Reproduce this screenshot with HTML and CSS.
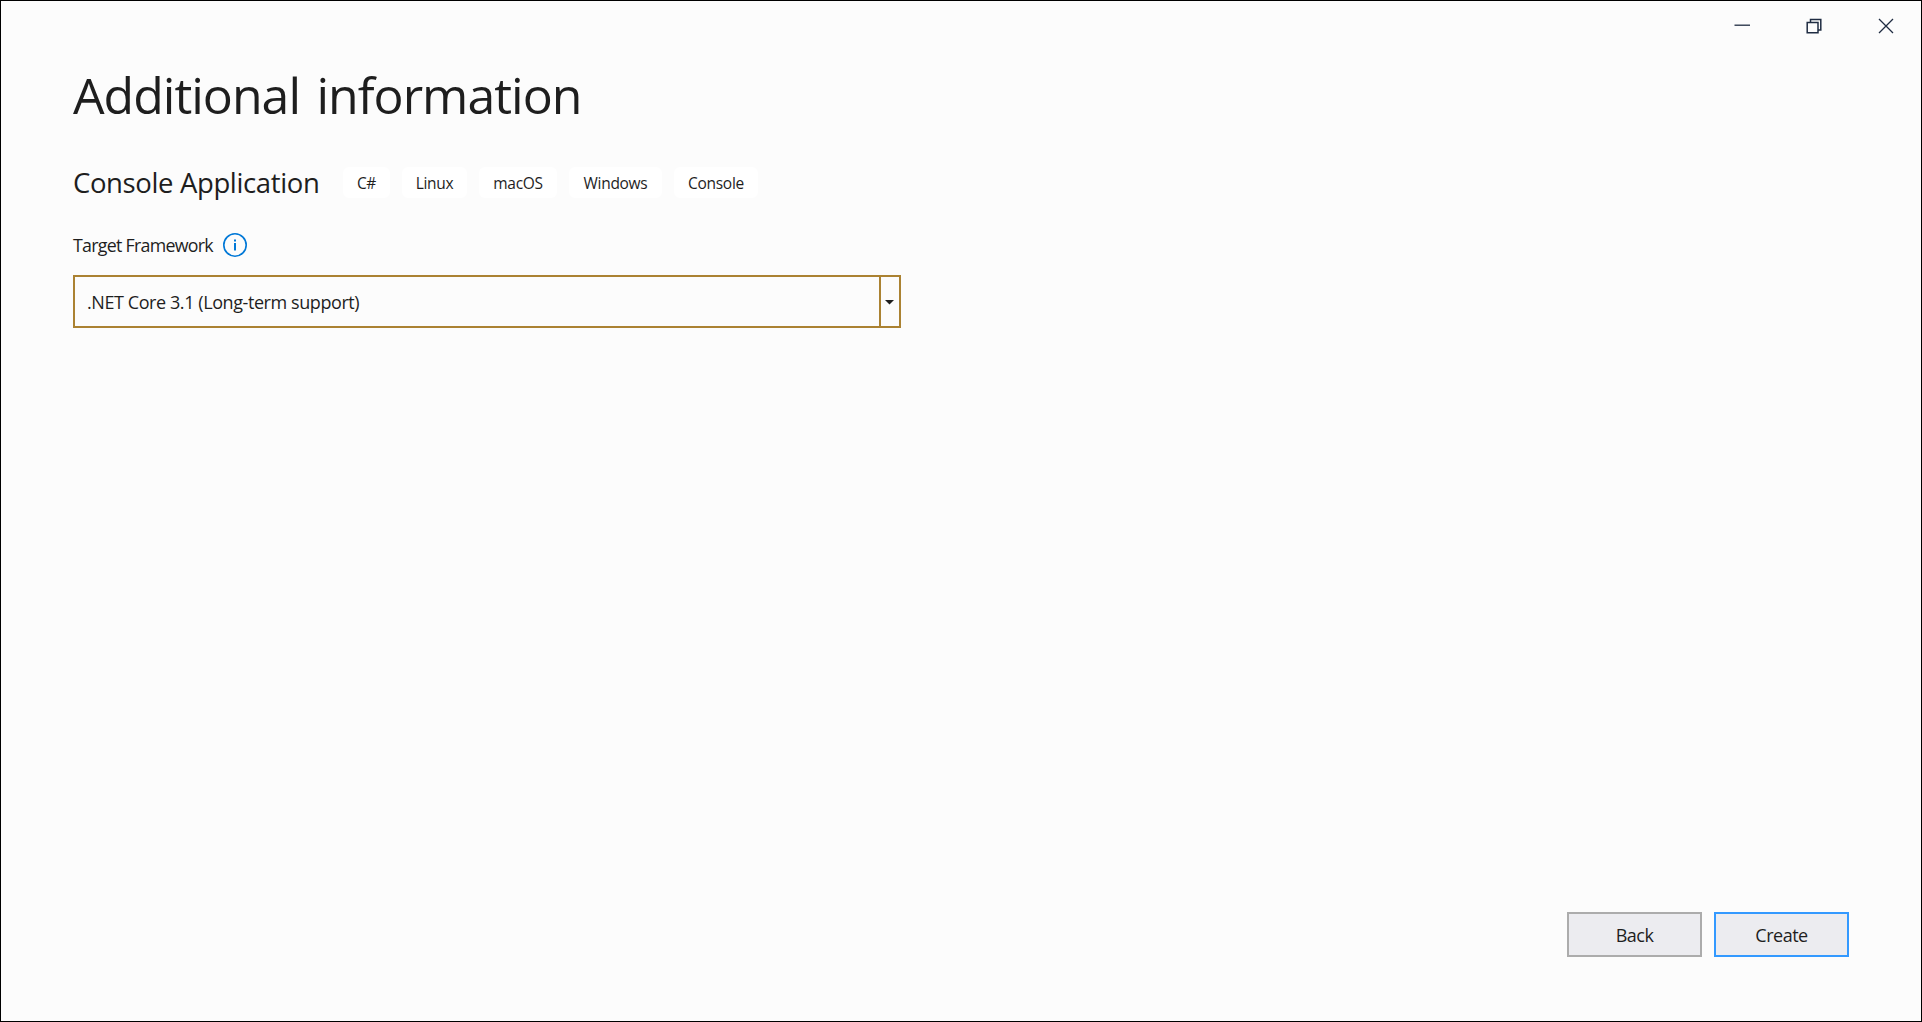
FILE: index.html
```html
<!DOCTYPE html>
<html lang="en">
<head>
<meta charset="utf-8">
<title>Additional information</title>
<link rel="stylesheet" href="styles.css">
</head>
<body>
<div class="window">
  <header class="caption">
    <svg class="caption-icon" viewBox="0 0 18 18"><path d="M1.5 8.2H17"/></svg>
    <svg class="caption-icon restore" viewBox="0 0 18 18"><path d="M5.5 5V2.5H15.8V13H13.5M2.2 5.5H13V15.7H2.2Z"/></svg>
    <svg class="caption-icon" viewBox="0 0 18 18"><path d="M2 2L16 16M16 2L2 16"/></svg>
  </header>
  <main class="content">
    <h1 class="title">Additional information</h1>
    <div class="project">
      <h2 class="project-name">Console Application</h2>
      <ul class="tags">
        <li class="tag tag-language">C#</li>
        <li class="tag tag-linux">Linux</li>
        <li class="tag tag-macos">macOS</li>
        <li class="tag tag-windows">Windows</li>
        <li class="tag tag-type">Console</li>
      </ul>
    </div>
    <div class="field-label">
      <span class="label-text">Target Framework</span>
      <svg class="info" viewBox="0 0 24 24"><circle cx="12" cy="12" r="11.2"/><path class="info-mark" d="M12 10V17.5M12 6.5V8.5"/></svg>
    </div>
    <div class="combo">
      <span class="combo-value">.NET Core 3.1 (Long-term support)</span>
      <span class="combo-toggle"><svg class="arrow" viewBox="0 0 9 5"><path d="M0 0H9L4.5 4.6Z"/></svg></span>
    </div>
  </main>
  <footer class="actions">
    <button class="button button-back"><span>Back</span></button>
    <button class="button button-create"><span>Create</span></button>
  </footer>
</div>
</body>
</html>
```
FILE: styles.css
```css
* { box-sizing: border-box; }
body {
  margin: 0;
  font-family: "Open Sans", "Noto Sans", sans-serif;
  color: #1e1e1e;
}
.window {
  display: flex;
  flex-direction: column;
  height: 1022px;
  border: 1px solid #000;
  background: #fcfcfc;
}
.caption {
  display: flex;
  justify-content: flex-end;
  gap: 54px;
  height: 54px;
  padding: 16px 26px 0 0;
}
.caption-icon {
  width: 18px;
  height: 18px;
  fill: none;
  stroke: #1f2c42;
  stroke-width: 1.3;
}
.restore { stroke-width: 1.5; }
.content {
  flex: 1;
  padding: 0 72px;
}
.title {
  margin: 0;
  font-size: 50px;
  font-weight: 400;
  line-height: 80px;
  letter-spacing: -1px;
  word-spacing: 4.5px;
}
.project {
  display: flex;
  align-items: center;
  height: 31px;
  margin-top: 32px;
}
.project-name {
  width: 270px;
  margin: 0;
  font-size: 27.5px;
  font-weight: 400;
  line-height: 31px;
  letter-spacing: -0.37px;
  white-space: nowrap;
}
.tags {
  display: flex;
  gap: 12px;
  margin: 0;
  padding: 0;
  list-style: none;
}
.tag {
  height: 31px;
  border-radius: 6px;
  background: #fff;
  font-size: 15.5px;
  line-height: 33px;
  text-align: center;
  letter-spacing: -0.3px;
}
.tag-language { width: 47px; }
.tag-linux { width: 65px; }
.tag-macos { width: 78px; }
.tag-windows { width: 93px; }
.tag-type { width: 84px; }
.field-label {
  display: flex;
  align-items: center;
  height: 24px;
  margin-top: 35px;
}
.label-text {
  width: 150px;
  font-size: 17.8px;
  line-height: 24px;
  letter-spacing: -0.72px;
  white-space: nowrap;
}
.info {
  width: 24px;
  height: 24px;
  fill: none;
  stroke: #0078d7;
  stroke-width: 1.6;
}
.info-mark { stroke-width: 2; }
.combo {
  display: flex;
  width: 828px;
  height: 53px;
  margin-top: 18px;
  border: 2px solid #ab8232;
}
.combo-value {
  flex: 1;
  padding-left: 12px;
  font-size: 18px;
  line-height: 51px;
  letter-spacing: -0.42px;
}
.combo-toggle {
  display: flex;
  justify-content: center;
  width: 20px;
  padding: 23px 1px 0 0;
  border-left: 2px solid #ab8232;
}
.arrow {
  width: 9px;
  height: 5px;
  fill: #1e1e1e;
}
.actions {
  display: flex;
  justify-content: flex-end;
  gap: 12px;
  padding: 0 72px 64px 0;
}
.button {
  width: 135px;
  height: 45px;
  padding: 2px 0 0;
  border: 2px solid #acacac;
  background: #ececf0;
  color: #1e1e1e;
  font: 18px/39px "Open Sans", "Noto Sans", sans-serif;
  letter-spacing: -0.5px;
}
.button-create { border-color: #3399ff; }
```
